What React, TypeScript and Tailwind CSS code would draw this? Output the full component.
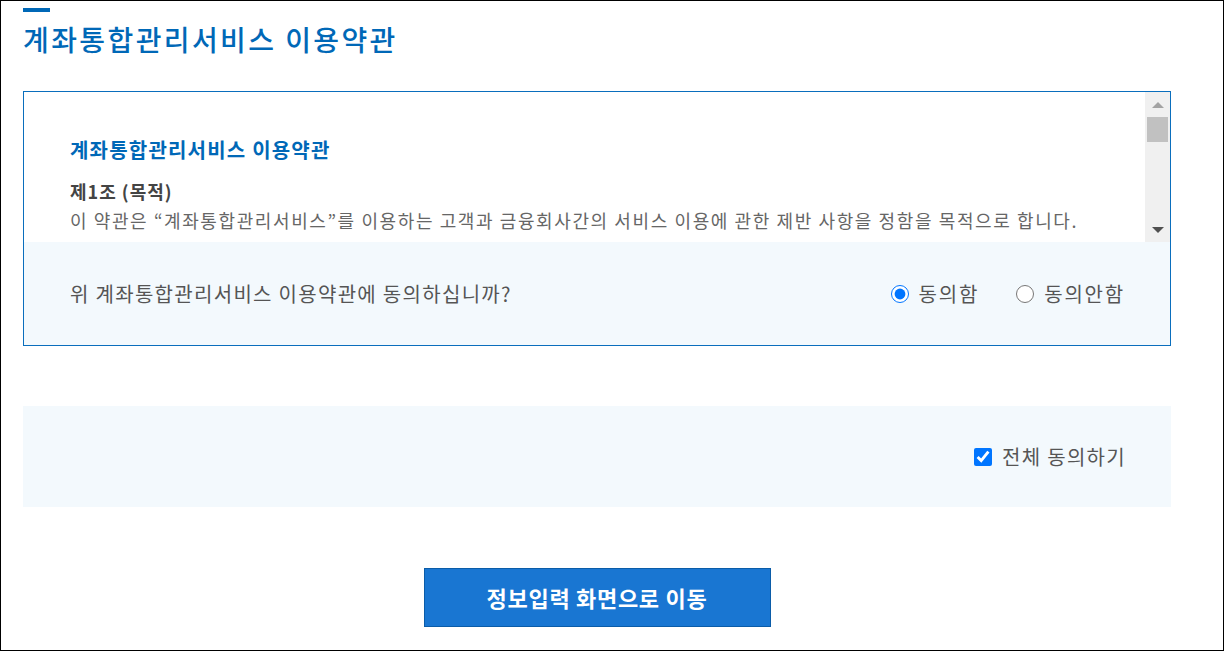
import React, { useState } from 'react'

export default function App() {
  const [agree, setAgree] = useState<'y' | 'n'>('y')
  const [all, setAll] = useState(true)

  return (
    <div className="w-[1224px] h-[651px] border border-black bg-white font-['Noto_Sans_CJK_KR','Noto_Sans',sans-serif] overflow-hidden">
      <div className="pl-[22px] pr-[52px] pt-[7px]">
        {/* Title */}
        <div className="w-[27px] h-[4px] bg-[#0068b7]" />
        <h1 className="mt-[7px] text-[28px] leading-[40px] tracking-[2.4px] text-[#0068b7] font-medium">
          계좌통합관리서비스 이용약관
        </h1>

        {/* Terms box */}
        <div className="mt-[32px] border border-[#0a6ebd]">
          <div className="flex h-[150px]">
            <div className="flex-1 overflow-hidden pl-[46px] pt-[43px]">
              <h2 className="text-[20px] leading-[30px] tracking-[1.2px] font-bold text-[#0068b7]">
                계좌통합관리서비스 이용약관
              </h2>
              <h3 className="mt-[12px] text-[18px] leading-[29px] tracking-[1px] font-bold text-[#444]">제1조 (목적)</h3>
              <p className="text-[18px] leading-[29px] tracking-[1.6px] text-[#666] whitespace-nowrap">
                이 약관은 “계좌통합관리서비스”를 이용하는 고객과 금융회사간의 서비스 이용에 관한 제반 사항을 정함을 목적으로 합니다.
              </p>
            </div>
            {/* scrollbar */}
            <div className="w-[25px] bg-[#f0f0f0] flex flex-col items-center">
              <div className="mt-[10px] w-0 h-0 border-x-[6px] border-x-transparent border-b-[6px] border-b-[#a3a3a3]" />
              <div className="mt-[9px] w-[21px] h-[25px] bg-[#c1c1c1]" />
              <div className="mt-auto mb-[9px] w-0 h-0 border-x-[6px] border-x-transparent border-t-[6px] border-t-[#505050]" />
            </div>
          </div>
          <div className="h-[103px] bg-[#f3f9fd] flex items-center justify-between pl-[46px] pr-[45px]">
            <p className="text-[20px] tracking-[1.3px] text-[#555]">위 계좌통합관리서비스 이용약관에 동의하십니까?</p>
            <div className="flex items-center gap-[37px] text-[20px] tracking-[1.8px] text-[#555]">
              <label className="flex items-center gap-[10px]">
                <input
                  type="radio"
                  name="agree"
                  checked={agree === 'y'}
                  onChange={() => setAgree('y')}
                  className="m-0 w-[18px] h-[18px]"
                />
                동의함
              </label>
              <label className="flex items-center gap-[10px]">
                <input
                  type="radio"
                  name="agree"
                  checked={agree === 'n'}
                  onChange={() => setAgree('n')}
                  className="m-0 w-[18px] h-[18px]"
                />
                동의안함
              </label>
            </div>
          </div>
        </div>

        {/* All agree */}
        <div className="mt-[60px] h-[101px] bg-[#f3f9fd] flex items-center justify-end pr-[45px]">
          <label className="flex items-center gap-[10px] text-[20px] tracking-[1.3px] text-[#555]">
            <input
              type="checkbox"
              checked={all}
              onChange={() => setAll(v => !v)}
              className="m-0 w-[18px] h-[18px]"
            />
            전체 동의하기
          </label>
        </div>

        {/* Button */}
        <div className="mt-[61px] flex justify-center">
          <button className="w-[347px] h-[59px] bg-[#1976d2] border border-[#0b5ca8] text-white text-[22px] tracking-[0.7px] font-bold">
            정보입력 화면으로 이동
          </button>
        </div>
      </div>
    </div>
  )
}
